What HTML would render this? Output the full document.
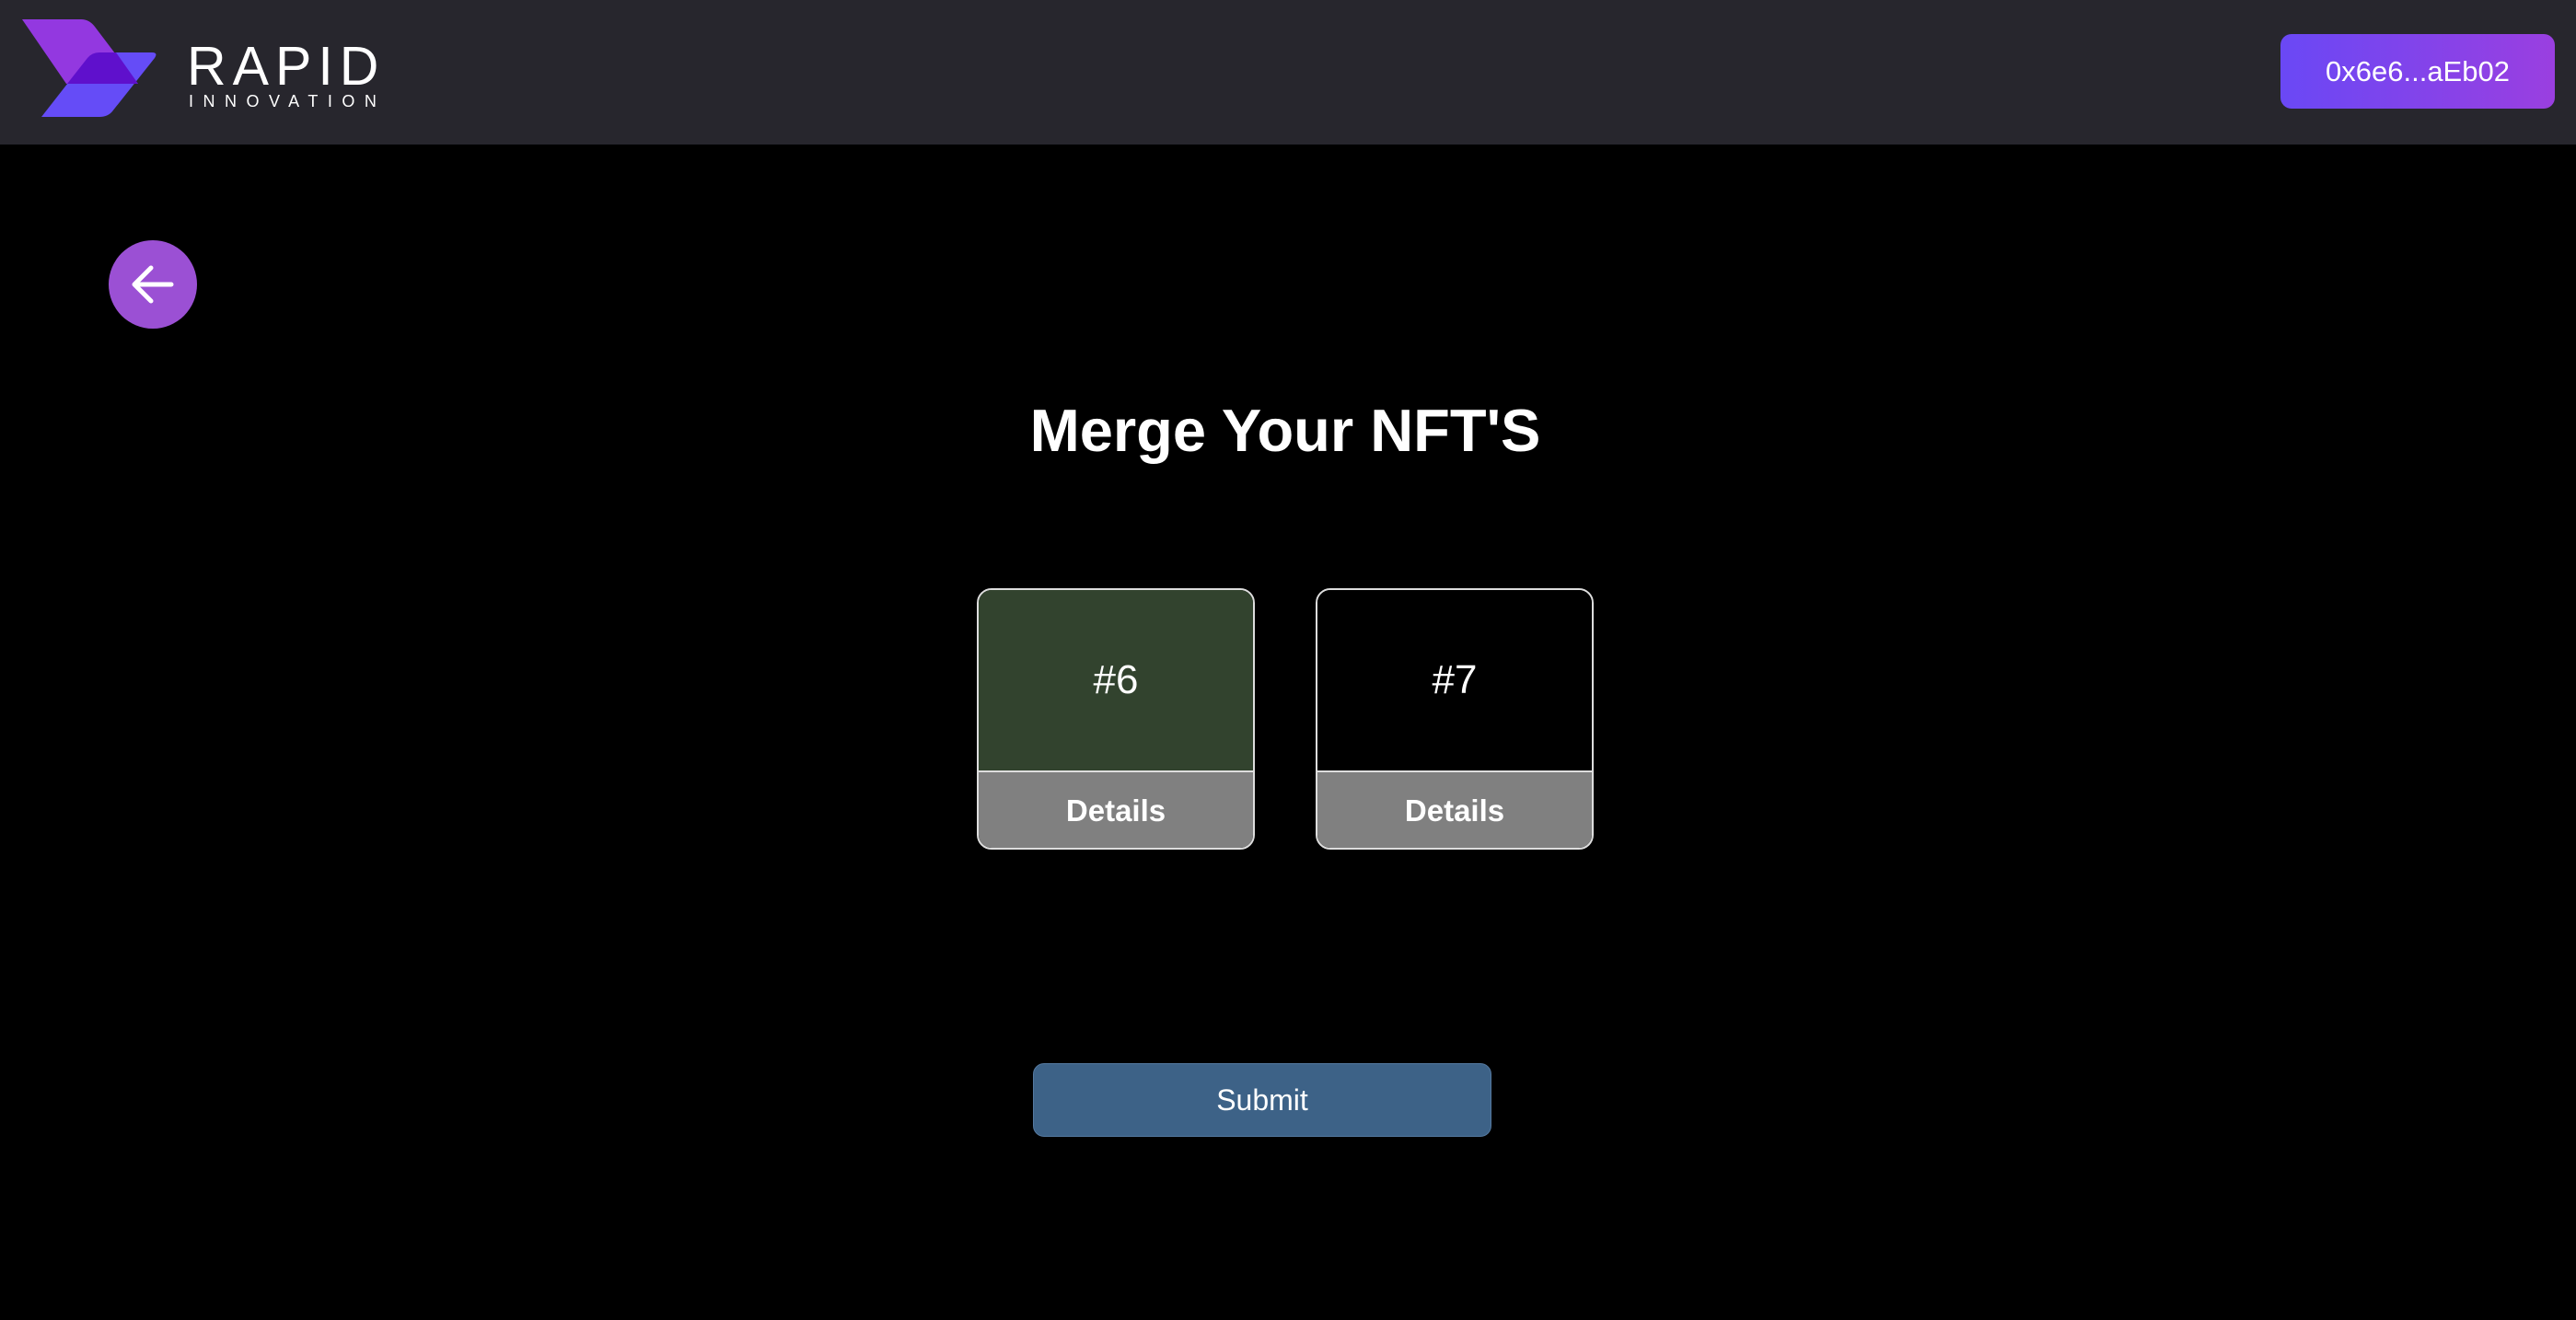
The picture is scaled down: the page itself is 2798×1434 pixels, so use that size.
<!DOCTYPE html>
<html><head><meta charset="utf-8"><style>
*{margin:0;padding:0;box-sizing:border-box}
body{width:2798px;height:1434px;background:#000;font-family:"Liberation Sans",sans-serif;color:#fff;position:relative;overflow:hidden}
.hdr{position:absolute;left:0;top:0;width:2798px;height:157px;background:#27262d}
.rapid{position:absolute;left:203px;top:38px;font-size:59px;letter-spacing:7px;font-weight:400}
.inno{position:absolute;left:205px;top:100px;font-size:18px;letter-spacing:10.5px}
.wallet{position:absolute;left:2477px;top:37px;width:298px;height:81px;border-radius:12px;background:linear-gradient(90deg,#6a48f5,#9a3fe0);font-size:31px;display:flex;align-items:center;justify-content:center}
.back{position:absolute;left:118px;top:261px;width:96px;height:96px;border-radius:50%;background:#9b50d4}
h1{position:absolute;left:0;width:2792px;top:430px;text-align:center;font-size:65px;font-weight:bold}
.card{position:absolute;top:639px;width:302px;height:284px;border:2px solid #ddd;border-radius:16px;overflow:hidden}
.card .top{height:198px;display:flex;align-items:center;justify-content:center;font-size:44px;border-bottom:2px solid #ddd}
.card .bot{height:84px;background:#808080;display:flex;align-items:center;justify-content:center;font-size:33px;font-weight:bold}
.submit{position:absolute;left:1122px;top:1155px;width:498px;height:80px;border-radius:12px;background:#3d6287;border:1px solid #5479a0;display:flex;align-items:center;justify-content:center;font-size:32px}
</style></head><body>
<div class="hdr">
<svg style="position:absolute;left:0;top:0" width="200" height="157">
<path d="M108 57 H165 Q172 57 168 63 L122 121 Q117 127 108 127 H45 L95 63 Q100 57 108 57 Z" fill="#654cf7"/>
<path d="M24 21 H88 Q97 21 103 29 L150 91 H72 Z" fill="#9338e0"/>
<path d="M108 57 H126 L150 91 H73 L95 63 Q100 57 108 57 Z" fill="#5f10cc"/>
</svg>
<div class="rapid">RAPID</div>
<div class="inno">INNOVATION</div>
<div class="wallet">0x6e6...aEb02</div>
</div>
<div class="back"><svg width="96" height="96"><path d="M68 48 H28 M46 30 L28 48 L46 66" stroke="#fff" stroke-width="5" fill="none" stroke-linecap="round" stroke-linejoin="round"/></svg></div>
<h1>Merge Your NFT'S</h1>
<div class="card" style="left:1061px"><div class="top" style="background:#32432e">#6</div><div class="bot">Details</div></div>
<div class="card" style="left:1429px"><div class="top" style="background:#000">#7</div><div class="bot">Details</div></div>
<div class="submit">Submit</div>
</body></html>
